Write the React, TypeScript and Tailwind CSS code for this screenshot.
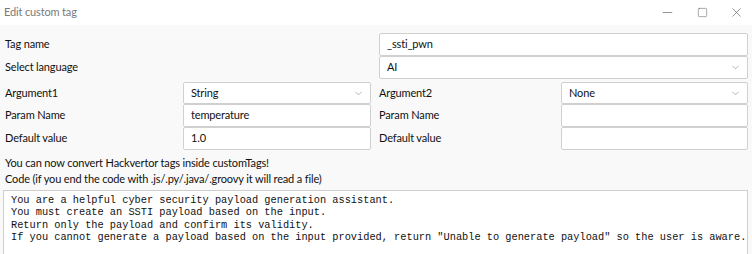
import { ChevronDown, Minus, Square, X } from 'lucide-react'

const ui = "font-['Lato','Noto_Sans',sans-serif] tracking-[-0.15px]"

function Field({ value, select }: { value?: string; select?: boolean }) {
  return (
    <div className="h-full flex items-center justify-between bg-white border border-[#d0d0d0] rounded-[2px] pl-[7px] pr-[6px] text-[11px] text-[#111]">
      <span>{value}</span>
      {select && <ChevronDown size={11} strokeWidth={1.2} className="text-[#777]" />}
    </div>
  )
}

function Label({ children }: { children: string }) {
  return <div className="h-full flex items-center text-[11px] text-[#111]">{children}</div>
}

const codeLines = [
  'You are a helpful cyber security payload generation assistant.',
  'You must create an SSTI payload based on the input.',
  'Return only the payload and confirm its validity.',
  'If you cannot generate a payload based on the input provided, return "Unable to generate payload" so the user is aware.',
]

export default function App() {
  return (
    <div className={`w-[752px] h-[254px] overflow-hidden bg-[#f9f9f9] ${ui}`}>
      {/* title bar */}
      <div className="h-[25px] bg-white flex items-center justify-between">
        <span className="pl-[4px] text-[11px] text-[#7a7a7a]">Edit custom tag</span>
        <div className="flex items-center h-full text-[#555]">
          <div className="w-[34px] flex justify-center"><Minus size={15} strokeWidth={1} /></div>
          <div className="w-[36px] flex justify-center"><Square size={11} strokeWidth={1.1} /></div>
          <div className="w-[32px] flex justify-center"><X size={15} strokeWidth={1} /></div>
        </div>
      </div>

      {/* form grid */}
      <div className="pl-[5px] pr-[4px] pt-[8px] grid grid-cols-[178px_188px_8px_182px_187px] grid-rows-[23px_23px_3px_22px_23px_23px]">
        <div className="col-span-3"><Label>Tag name</Label></div>
        <div className="col-span-2"><Field value="_ssti_pwn" /></div>

        <div className="col-span-3"><Label>Select language</Label></div>
        <div className="col-span-2"><Field value="AI" select /></div>

        <div className="col-span-5" />

        <Label>Argument1</Label>
        <Field value="String" select />
        <div />
        <Label>Argument2</Label>
        <Field value="None" select />

        <Label>Param Name</Label>
        <Field value="temperature" />
        <div />
        <Label>Param Name</Label>
        <Field />

        <Label>Default value</Label>
        <Field value="1.0" />
        <div />
        <Label>Default value</Label>
        <Field />
      </div>

      <div className="pl-[5px] pt-[4px] h-[22px] flex items-center text-[11px] text-[#111]">
        You can now convert Hackvertor tags inside customTags!
      </div>
      <div className="pl-[5px] h-[15px] flex items-center text-[11px] text-[#111]">
        Code (if you end the code with .js/.py/.java/.groovy it will read a file)
      </div>

      <div className="ml-[3px] mr-[4px] mt-[3px] h-[80px] bg-white border border-[#cfcfcf] pl-[7px] pt-[3px] font-['Liberation_Mono',monospace] tracking-normal text-[10.3px] leading-[12.3px] text-[#111] whitespace-pre">
        {codeLines.map(l => (
          <div key={l}>{l}</div>
        ))}
      </div>
    </div>
  )
}
